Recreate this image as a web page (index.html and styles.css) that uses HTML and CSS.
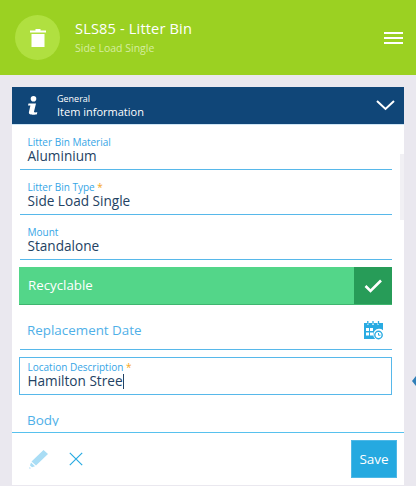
FILE: index.html
```html
<!DOCTYPE html>
<html lang="en">
<head>
<meta charset="utf-8">
<title>SLS85 - Litter Bin</title>
<link rel="stylesheet" href="styles.css">
</head>
<body>
<header class="top">
  <div class="avatar">
    <svg width="16" height="19" viewBox="0 0 16 19"><path fill="#fff" d="M0 2.5h5.5V1h5v1.500H16V4.500H0zM1.500 6h13v13h-13z"/></svg>
  </div>
  <div class="titles">
    <div class="title">SLS85 - Litter Bin</div>
    <div class="subtitle">Side Load Single</div>
  </div>
  <div class="burger"><span></span><span></span><span></span></div>
</header>
<main class="panel">
  <div class="bar">
    <svg class="info" width="12" height="20" viewBox="0 0 12 20"><circle fill="#fff" cx="6.500" cy="2.800" r="2.800"/><path fill="#fff" d="M1.500 7.500h7.500l-2 8c-.2 1 .8 1 3.300.8l-.4 1.900c-1.500.6-8.500 1.200-8-2l1.500-6.700H1z"/></svg>
    <div class="bar-text">
      <div class="bar-small">General</div>
      <div class="bar-main">Item information</div>
    </div>
    <svg class="chev" width="19" height="11" viewBox="0 0 19 11"><path fill="none" stroke="#fff" stroke-width="2" d="M1 1l8.500 8L18 1"/></svg>
  </div>
  <div class="content">
    <div class="track"></div>
    <div class="field"><div class="label">Litter Bin Material</div><div class="value">Aluminium</div></div>
    <div class="field"><div class="label">Litter Bin Type <span class="star">*</span></div><div class="value">Side Load Single</div></div>
    <div class="field"><div class="label">Mount</div><div class="value">Standalone</div></div>
    <div class="toggle">
      <span class="toggle-label">Recyclable</span>
      <span class="toggle-box"><svg width="18" height="14" viewBox="0 0 18 14"><path fill="none" stroke="#fff" stroke-width="2.600" d="M1.500 7l5 5L17 1.500"/></svg></span>
    </div>
    <div class="date">
      <span>Replacement Date</span>
      <svg width="19" height="19" viewBox="0 0 19 19"><path fill="#29abe2" d="M0 2h3v2h1.500V2h3.500v2h2V2h3.500v2H15V2h4v7.200a5.500 5.500 0 0 0-7.800 8.800H0z"/><path fill="#fff" d="M2 7h3v3H2zM6 7h3v3H6zM2 11.500h3v3H2zM6 11.500h3v3H6z"/><circle cx="14.500" cy="14" r="3.700" fill="#fff" stroke="#29abe2" stroke-width="1.400"/><path stroke="#29abe2" fill="none" d="M14.500 12v2.200h2"/><path stroke="#29abe2" stroke-width="1.300" d="M3.800 0v3.500M9 0v3.500M14.500 0v3.500"/></svg>
    </div>
    <div class="focus"><div class="label">Location Description <span class="star">*</span></div><div class="value">Hamilton Stree<span class="caret"></span></div></div>
    <div class="next"><div class="next-clip">Body</div></div>
  </div>
  <footer class="foot">
    <svg width="19" height="19" viewBox="0 0 19 19"><path fill="#a9ddf5" d="M14.500 0L19 4 7 15.500l-4.500-4zM2 12.500l4 3.800-3 1-2-1.800zM.5 17l1.500 1.300-1.700.5z"/></svg>
    <svg class="cross" width="14" height="14" viewBox="0 0 14 14"><path fill="none" stroke="#29abe2" stroke-width="1.200" d="M.8.800l12.400 12.400M13.200.800L.8 13.200"/></svg>
    <button class="save">Save</button>
  </footer>
</main>
<div class="pointer"></div>
</body>
</html>
```
FILE: styles.css
```css
* { box-sizing: border-box; }
html, body { margin: 0; height: 486px; overflow: hidden; }
body { background: #eae8ef; font-family: "Open Sans", "Noto Sans", sans-serif; position: relative; }
.top { height: 75px; background: #9bd122; display: flex; align-items: center; padding: 0 13px 0 15px; }
.avatar { width: 45px; height: 45px; border-radius: 50%; background: #b0e040; display: flex; align-items: center; justify-content: center; }
.titles { margin-left: 15px; flex: 1; margin-top: -1px; }
.title { color: #fff; font-size: 14.600px; line-height: 20px; letter-spacing: .15px; }
.subtitle { color: #d5eda0; font-size: 10.500px; line-height: 16px; margin-top: 2px; }
.burger { display: flex; flex-direction: column; gap: 3px; width: 19px; margin-top: 1px; }
.burger span { height: 2px; background: #fff; }
.panel { margin: 12px 12px 0; background: #fff; height: 398px; display: flex; flex-direction: column; }
.bar { height: 37px; background: #104678; display: flex; align-items: center; color: #fff; padding: 0 9px 0 15px; flex: none; }
.info { flex: none; }
.bar-text { margin-left: 18px; flex: 1; }
.bar-small { font-size: 9px; line-height: 11px; }
.bar-main { font-size: 11px; line-height: 15px; }
.content { height: 308px; overflow: hidden; border-top: 1px solid #cfe6f5; padding: 0 12px 0 8px; flex: none; position: relative; }
.track { position: absolute; right: 0; top: 29px; width: 4px; height: 66px; background: #f1f0f4; }
.field { height: 45px; padding: 11px 0 0 7.500px; border-bottom: 1px solid #57b8ea; }
.field:first-of-type { height: 44px; padding-top: 10px; }
.label { color: #36a5e6; font-size: 10px; line-height: 12px; font-weight: 500; }
.star { color: #f5a623; }
.value { color: #234263; font-size: 13.600px; line-height: 16px; }
.toggle { margin: 7px 0 0 -1px; height: 38px; background: #53d689; display: flex; align-items: center; justify-content: space-between; color: #fff; font-size: 13.300px; padding: 0 0 1px 9px; border-bottom: 1px solid #3fb56f; }
.toggle-box { width: 38px; height: 37px; background: #279c58; display: flex; align-items: center; justify-content: center; margin-bottom: -1px; }
.date { height: 45px; padding: 6px 9px 0 7px; border-bottom: 1px solid #57b8ea; display: flex; align-items: center; justify-content: space-between; color: #4fb0e8; font-size: 13.400px; }
.focus { margin: 7px 0 0 -1px; height: 38px; border: 1px solid #57b8ea; padding: 3px 7px 0 7.500px; }
.caret { display: inline-block; width: 1px; height: 15px; background: #234263; vertical-align: -3px; }
.next { height: 31px; padding-top: 16px; }
.next-clip { height: 15px; overflow: hidden; color: #4fb0e8; font-size: 13.500px; line-height: 19px; padding-left: 7px; }
.foot { flex: 1; border-top: 1px solid #57c1ee; display: flex; align-items: center; padding: 0 7px 0 17px; }
.cross { margin-left: 21px; }
.save { margin-left: auto; width: 46px; height: 38px; background: #25a9e0; color: #fff; border: 1px solid #4fb8e6; font: 13.500px "Open Sans", sans-serif; padding: 0; }
.pointer { position: absolute; left: 412px; top: 376px; border: 5px solid transparent; border-left: 0; border-right: 4px solid #2f7fb8; }
```
